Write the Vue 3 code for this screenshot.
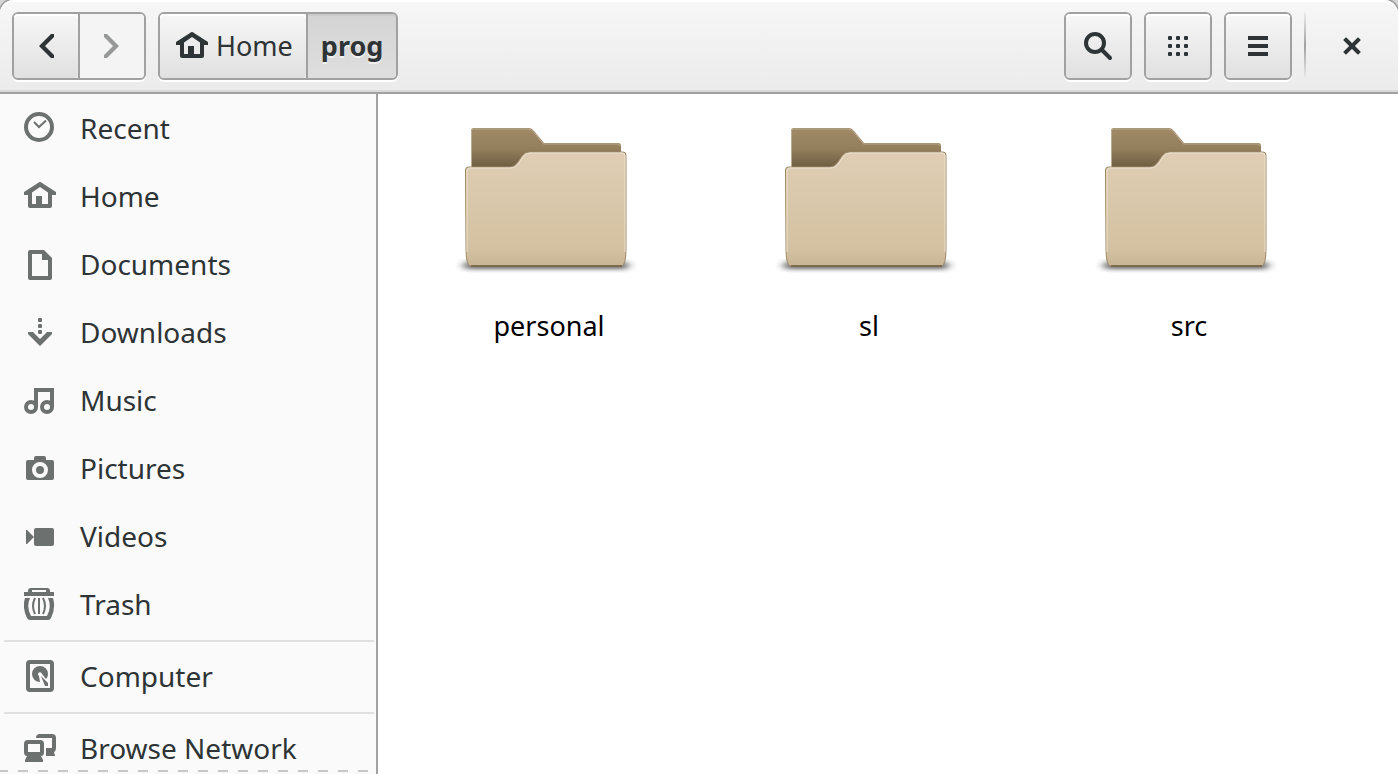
<script setup>
const places = [
  { name: 'Recent', icon: 'recent' },
  { name: 'Home', icon: 'home' },
  { name: 'Documents', icon: 'documents' },
  { name: 'Downloads', icon: 'downloads' },
  { name: 'Music', icon: 'music' },
  { name: 'Pictures', icon: 'pictures' },
  { name: 'Videos', icon: 'videos' },
  { name: 'Trash', icon: 'trash' },
  { name: 'Computer', icon: 'computer', separated: true },
  { name: 'Browse Network', icon: 'network', separated: true },
]
const folders = ['personal', 'sl', 'src']
</script>

<template>
  <svg class="defs" aria-hidden="true">
    <symbol id="recent" viewBox="0 0 32 32">
      <circle cx="15" cy="15" r="13" fill="none" stroke="currentColor" stroke-width="4" />
      <path d="M10 10l5 5 7-6.500" fill="none" stroke="currentColor" stroke-width="2" />
    </symbol>
    <symbol id="home" viewBox="0 0 32 32">
      <path fill="currentColor" fill-rule="evenodd" d="M16 2q1 0 2 1l14 9v3h-4v11q0 2-2 2H6q-2 0-2-2V15H0v-3l14-9q1-1 2-1zM16 7l-8 5.500V24h4v-8h6v8h6V12.500z" />
    </symbol>
    <symbol id="documents" viewBox="0 0 32 32">
      <path fill="currentColor" fill-rule="evenodd" d="M6 2h14l8 8v20q0 2-2 2H6q-2 0-2-2V4q0-2 2-2zM8 6v22h16V12h-6V6z" />
    </symbol>
    <symbol id="downloads" viewBox="0 0 32 32">
      <g fill="currentColor">
        <rect x="14" y="2" width="4" height="4" rx="1" />
        <rect x="14" y="8" width="4" height="4" rx="1" />
        <rect x="14" y="14" width="4" height="4" rx="1" />
        <path d="M4 16h5l7 7 7-7h5v2L16 30 4 18z" />
      </g>
    </symbol>
    <symbol id="music" viewBox="0 0 32 32">
      <g fill="none" stroke="currentColor" stroke-width="4">
        <path d="M12 23V6h16v17" />
        <circle cx="7" cy="23" r="5" />
        <circle cx="23" cy="23" r="5" />
      </g>
    </symbol>
    <symbol id="pictures" viewBox="0 0 32 32">
      <path fill="currentColor" fill-rule="evenodd" d="M4 8h6V6q0-2 2-2h8q2 0 2 2v2h6q2 0 2 2v16q0 2-2 2H4q-2 0-2-2V10q0-2 2-2zM16 10a8 8 0 1 0 0 16 8 8 0 0 0 0-16z" />
      <circle cx="16" cy="18" r="4" fill="currentColor" />
    </symbol>
    <symbol id="videos" viewBox="0 0 32 32">
      <rect x="10" y="8" width="20" height="18" rx="2" fill="currentColor" />
      <path d="M2 10h1l7 7-7 7H2z" fill="currentColor" />
    </symbol>
    <symbol id="trash" viewBox="0 0 32 32">
      <path fill="currentColor" fill-rule="evenodd" d="M0 4h4V3q0-3 3-3h16q3 0 3 3v1h4v4H0zM8 2v2h14V2z" />
      <path fill="currentColor" d="M1 10h5q-4 9 1 18h16q5-9 1-18h5q3 10-2 20-1 2-3 2H6q-2 0-3-2-5-10-2-20z" />
      <path d="M11 10q-4 8 0 16M15 10v16M19 10q4 8 0 16" fill="none" stroke="currentColor" stroke-width="2" />
    </symbol>
    <symbol id="computer" viewBox="0 0 32 32">
      <rect x="4" y="2" width="24" height="28" rx="2" fill="none" stroke="currentColor" stroke-width="4" />
      <path fill="currentColor" d="M16 6a8 8 0 0 1 8 8q0 3-2 5l-4-5a2 2 0 1 0-3 2l1 6a8 8 0 0 1 0-16z" />
      <path fill="currentColor" d="M17 16l7 7v3h-3z" />
    </symbol>
    <symbol id="network" viewBox="0 0 32 32">
      <path fill="currentColor" d="M12 6q0-4 4-4h12q4 0 4 4v10q0 3-2 4l1 4h-9V16h6V6z" />
      <path fill="currentColor" fill-rule="evenodd" d="M4 8h12q4 0 4 4v8q0 4-3 4l2 4v2H1v-2l2-4q-3 0-3-4v-8q0-4 4-4zM4 12v8h12v-8z" />
    </symbol>
    <symbol id="back" viewBox="0 0 32 32">
      <path d="M24 4v3l-9 9 9 9v3h-3L9 16 21 4z" fill="currentColor" />
    </symbol>
    <symbol id="forward" viewBox="0 0 32 32">
      <path d="M8 4v3l9 9-9 9v3h3l12-12L11 4z" fill="currentColor" />
    </symbol>
    <symbol id="search" viewBox="0 0 32 32">
      <circle cx="13" cy="13" r="9" fill="none" stroke="currentColor" stroke-width="4" />
      <path d="M20 20l8 8" stroke="currentColor" stroke-width="4" stroke-linecap="round" />
    </symbol>
    <symbol id="grid" viewBox="0 0 32 32">
      <g fill="currentColor">
        <template v-for="y in [6, 14, 22]" :key="y">
          <rect v-for="x in [6, 14, 22]" :key="x" :x="x" :y="y" width="4" height="4" rx="1" />
        </template>
      </g>
    </symbol>
    <symbol id="menu" viewBox="0 0 32 32">
      <path d="M6 6h20v4H6zM6 14h20v4H6zM6 22h20v4H6z" fill="currentColor" />
    </symbol>
    <symbol id="close" viewBox="0 0 32 32">
      <path d="M10 10l12 12M22 10L10 22" stroke="currentColor" stroke-width="4" stroke-linecap="square" />
    </symbol>
    <linearGradient id="folder-front" x1="0" y1="0" x2="0" y2="1">
      <stop offset="0" stop-color="#dfceb5" />
      <stop offset="0.850" stop-color="#d4c1a1" />
      <stop offset="1" stop-color="#c8b594" />
    </linearGradient>
    <linearGradient id="folder-back" x1="0" y1="0" x2="0" y2="1">
      <stop offset="0" stop-color="#a08a66" />
      <stop offset="0.500" stop-color="#94805d" />
      <stop offset="1" stop-color="#6d5c41" />
    </linearGradient>
    <filter id="soft" x="-20%" y="-200%" width="140%" height="500%">
      <feGaussianBlur stdDeviation="5 2" />
    </filter>
    <symbol id="folder" viewBox="0 0 192 176">
      <rect x="11" y="152" width="164" height="7" rx="3" fill="#222" opacity="0.700" filter="url(#soft)" />
      <path d="M18 58V21q0-3 3-3h55q3 0 5 3l10 12h74q3 0 3 3v10H74L60 58z" fill="url(#folder-back)" />
      <path d="M18.500 57V21q0-2 2-2h55q3 0 5 3l10 12h74q2 0 2 2" fill="none" stroke="#b9aa90" />
      <path d="M12.500 60q0-3 3-3H57q5 0 8-5l4-6q3-4 7-4h94q3 0 3 3v94q0 15-4 17H17q-4-2-4-17z" fill="url(#folder-front)" stroke="#9c8968" />
      <path d="M14 142V61q0-3 3-3h40q6 0 9-5l4-6q3-4 7-4h92q3 0 3 3v96" fill="none" stroke="#ece1cf" />
      <path d="M18 156h151" stroke="#7d6b4d" stroke-width="2" />
    </symbol>
  </svg>

  <div class="window">
    <header class="bar">
      <nav class="group" aria-label="History">
        <button class="tool" aria-label="Back"><svg class="icon"><use href="#back" /></svg></button>
        <button class="tool off" aria-label="Forward" disabled><svg class="icon"><use href="#forward" /></svg></button>
      </nav>
      <nav class="group" aria-label="Path">
        <button class="crumb"><svg class="icon"><use href="#home" /></svg>Home</button>
        <button class="crumb current" aria-current="page">prog</button>
      </nav>
      <div class="spacer"></div>
      <div class="group"><button class="tool" aria-label="Search"><svg class="icon"><use href="#search" /></svg></button></div>
      <div class="group"><button class="tool" aria-label="View as grid"><svg class="icon"><use href="#grid" /></svg></button></div>
      <div class="group"><button class="tool" aria-label="Menu"><svg class="icon"><use href="#menu" /></svg></button></div>
      <div class="divider"></div>
      <button class="close" aria-label="Close"><svg class="icon"><use href="#close" /></svg></button>
    </header>

    <div class="body">
      <aside class="sidebar">
        <ul class="places">
          <li v-for="p in places" :key="p.name" :class="{ separated: p.separated }">
            <a href="#" class="place"><svg class="icon"><use :href="'#' + p.icon" /></svg>{{ p.name }}</a>
          </li>
        </ul>
      </aside>
      <main class="files">
        <a v-for="f in folders" :key="f" href="#" class="folder">
          <svg class="picture" aria-hidden="true"><use href="#folder" /></svg>
          <span>{{ f }}</span>
        </a>
      </main>
    </div>
  </div>
</template>

<style>
body {
  background: #d6d6d6;
}
</style>

<style scoped>
.defs {
  position: absolute;
  width: 0;
  height: 0;
}
.window {
  display: flex;
  flex-direction: column;
  height: 100vh;
  font-family: "Noto Sans", "Open Sans", sans-serif;
  font-size: 28px;
  line-height: 36px;
  color: #2e3436;
}
.icon {
  flex: none;
  width: 32px;
  height: 32px;
}
.bar {
  display: flex;
  flex: none;
  align-items: center;
  gap: 12px;
  padding: 12px;
  border-bottom: 2px solid #a1a1a1;
  border-radius: 14px 14px 0 0;
  background: linear-gradient(#f7f7f7, #ebebeb);
  box-shadow: inset 0 2px #fff, inset 0 -2px #d9d9d9, 0 0 0 2px #a1a1a1;
}
.group {
  display: flex;
  border: 2px solid #a1a1a1;
  border-radius: 6px;
  box-shadow: 0 2px #fff;
}
button {
  display: flex;
  align-items: center;
  justify-content: center;
  height: 64px;
  padding: 0;
  border: 0;
  background: none;
  color: #2e3436;
  font: inherit;
}
.tool,
.crumb {
  border-radius: 4px;
  background: linear-gradient(#f7f7f7, #e0e0e0);
  box-shadow: inset 0 2px #fff;
}
.tool {
  width: 64px;
}
.group button + button {
  box-sizing: content-box;
  border-left: 2px solid #a1a1a1;
  border-radius: 0 4px 4px 0;
}
.group .off {
  background: #f4f4f4;
  color: #979999;
  box-shadow: none;
}
.crumb {
  gap: 8px;
  padding: 0 13px 0 16px;
  font-size: 27px;
}
.crumb.current {
  padding: 0 13px;
  background: linear-gradient(#d4d4d4, #dedede);
  box-shadow: inset 0 2px #cacaca;
  font-weight: 700;
  text-shadow: 0 2px #f0f0f0;
}
.spacer {
  flex: 1;
}
.divider {
  width: 2px;
  height: 68px;
  background: linear-gradient(#eee, #a1a1a1 50%, #eee);
}
.close {
  width: 68px;
}
.body {
  display: flex;
  flex: 1;
  min-height: 0;
}
.sidebar {
  position: relative;
  flex: none;
  width: 376px;
  overflow: hidden;
  border-right: 2px solid #a1a1a1;
  background: #fafafa;
}
.sidebar::after {
  content: "";
  position: absolute;
  right: 8px;
  bottom: 2px;
  left: 0;
  height: 2px;
  background: repeating-linear-gradient(90deg, #c6c6c6 0 8px, transparent 8px 18px, #c6c6c6 18px 20px);
}
.places {
  margin: 0;
  padding: 0;
  list-style: none;
}
.separated {
  margin: 2px 2px 0 4px;
  border-top: 2px solid #e0e0e0;
}
.place {
  display: flex;
  align-items: center;
  gap: 24px;
  height: 68px;
  padding-left: 24px;
  color: inherit;
  text-decoration: none;
}
.separated .place {
  padding-left: 20px;
}
.place .icon {
  color: #6c706f;
}
.files {
  display: grid;
  flex: 1;
  grid-template-columns: repeat(auto-fill, 320px);
  align-content: start;
  padding: 16px 11px;
  background: #fff;
  font-size: 27px;
}
.folder {
  display: flex;
  flex-direction: column;
  align-items: center;
  gap: 22px;
  color: #000;
  text-decoration: none;
}
.picture {
  width: 192px;
  height: 176px;
}
</style>
